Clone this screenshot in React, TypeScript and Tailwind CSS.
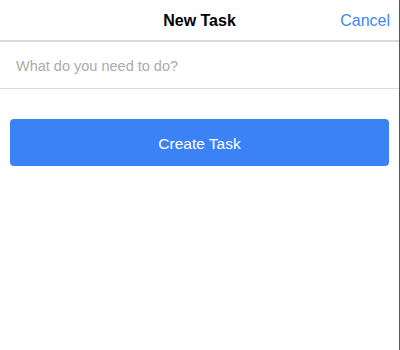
export default function App() {
  return (
    <div
      className="h-[350px] w-[400px] border-r border-[#555] bg-white"
      style={{ fontFamily: '"Liberation Sans", Arial, sans-serif' }}
    >
      <header className="relative flex h-[42px] items-center justify-center border-b-2 border-[#d9d9d9] pt-px">
        <h1 className="text-[16px] font-bold text-black">New Task</h1>
        <button className="absolute right-[9px] top-[9px] text-[16px] text-[#4287f5]">Cancel</button>
      </header>
      <div className="flex h-[47px] items-center border-b border-[#dcdcdc] px-4 pt-[3px]">
        <input
          className="w-full bg-transparent text-[14.5px] text-black outline-none placeholder:text-[#ababab]"
          placeholder="What do you need to do?"
        />
      </div>
      <div className="px-[10px] pt-[30px]">
        <button className="h-[47px] w-full rounded-[4px] bg-[#3b82f6] pt-[3px] text-[15.5px] text-white">
          Create Task
        </button>
      </div>
    </div>
  );
}
